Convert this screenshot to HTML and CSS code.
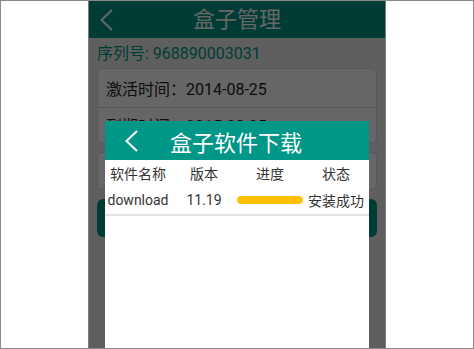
FILE: index.html
```html
<!DOCTYPE html>
<html lang="zh-CN">
<head>
    <meta charset="UTF-8">
    <meta name="viewport" content="width=device-width, initial-scale=1.0">
    <title>盒子管理</title>
    <link rel="stylesheet" href="styles.css">
</head>
<body>
    <div class="frame">
        <div class="phone">
            <div class="topbar">
                <svg class="back" width="13" height="22" viewBox="0 0 13 22"><polyline points="12,1 1.5,11 12,21" fill="none" stroke="#fff" stroke-width="2"/></svg>
                <h1>盒子管理</h1>
            </div>
            <div class="content">
                <p class="serial">序列号: 968890003031</p>
                <div class="card">
                    <div class="row row-first">激活时间：2014-08-25</div>
                    <div class="row row-second">到期时间：2015-08-25</div>
                </div>
                <div class="card">
                    <div class="row row-link"><span class="arrow">›</span></div>
                </div>
                <button class="main-button"></button>
            </div>
            <div class="mask"></div>

            <div class="dialog">
                <div class="dialog-header">
                    <svg class="back" width="13" height="22" viewBox="0 0 13 22"><polyline points="12,1 1.5,11 12,21" fill="none" stroke="#fff" stroke-width="2"/></svg>
                    <h2>盒子软件下载</h2>
                </div>
                <div class="table">
                    <div class="table-row table-head">
                        <span>软件名称</span>
                        <span>版本</span>
                        <span>进度</span>
                        <span>状态</span>
                    </div>
                    <div class="table-row table-item">
                        <span>download</span>
                        <span>11.19</span>
                        <span><div class="progress"><div class="progress-fill" style="width: 100%"></div></div></span>
                        <span>安装成功</span>
                    </div>
                </div>
            </div>
        </div>
    </div>
</body>
</html>
```

FILE: styles.css
```css
* {
    margin: 0;
    padding: 0;
    box-sizing: border-box;
}

body {
    background: #fff;
    font-family: 'Roboto', 'Noto Sans CJK SC', sans-serif;
}

.frame {
    width: 474px;
    height: 349px;
    border: 1px solid #8a8a8a;
    background: #fff;
    display: flex;
    justify-content: center;
}

.phone {
    width: 298px;
    height: 100%;
    border-left: 1px solid #7d7d7d;
    border-right: 1px solid #7d7d7d;
    background: #eee;
    position: relative;
    overflow: hidden;
}

.topbar {
    height: 37px;
    background: #009688;
    display: grid;
    grid-template-columns: 48px 1fr 48px;
    align-items: center;
}

.topbar .back {
    margin-left: 11px;
}

.topbar h1 {
    font-size: 22px;
    font-weight: normal;
    color: #fff;
    text-align: center;
    line-height: 37px;
}

.content {
    padding: 0 8px;
}

.serial {
    margin-top: 5px;
    margin-bottom: 3px;
    line-height: 22px;
    font-size: 16px;
    color: #009688;
}

.card {
    background: #fff;
    border: 1px solid #d6d6d6;
    border-radius: 5px;
    margin-bottom: 9px;
}

.row {
    height: 36px;
    padding: 0 8px;
    display: flex;
    align-items: center;
    justify-content: space-between;
    font-size: 16px;
    color: #222;
}

.row-first {
    height: 38px;
}

.row-second {
    height: 35px;
    border-top: 1px solid #d6d6d6;
}

.row-link {
    justify-content: flex-end;
}

.arrow {
    color: #999;
    font-size: 18px;
}

.main-button {
    display: block;
    width: 100%;
    height: 38px;
    border: none;
    border-radius: 6px;
    background: #009688;
}

.mask {
    position: absolute;
    inset: 0;
    background: rgba(0, 0, 0, 0.6);
}

.dialog {
    position: absolute;
    left: 16px;
    top: 120px;
    bottom: 0;
    width: 264px;
    background: #fff;
}

.dialog-header {
    height: 39px;
    background: #009688;
    display: flex;
    align-items: center;
    padding-left: 20px;
    gap: 32px;
}

.dialog-header h2 {
    font-size: 22px;
    font-weight: normal;
    color: #fff;
}

.table-row {
    display: grid;
    grid-template-columns: repeat(4, 1fr);
    align-items: center;
    text-align: center;
    font-size: 14px;
    color: #333;
}

.table-head {
    height: 26px;
}

.table-item {
    height: 30px;
    border-bottom: 2px solid #e4e4e4;
}

.progress {
    height: 8px;
    border-radius: 4px;
    background: #eee;
    overflow: hidden;
}

.progress-fill {
    height: 100%;
    border-radius: 4px;
    background: #ffc107;
}
```
